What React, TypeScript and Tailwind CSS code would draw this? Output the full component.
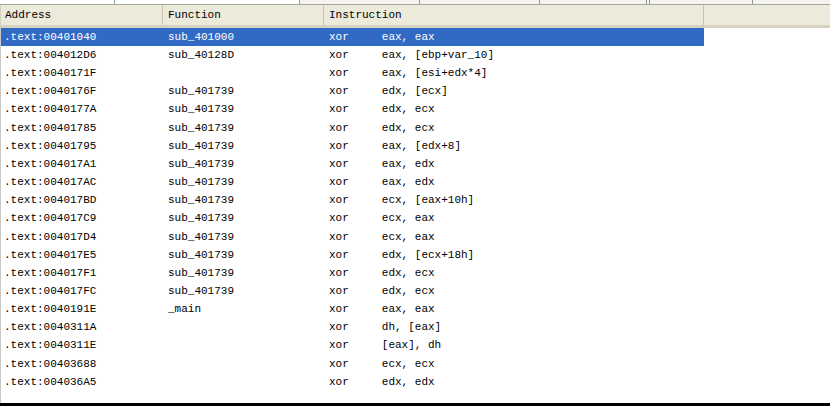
const rows: [string, string, string][] = [
  [".text:00401040", "sub_401000", "xor     eax, eax"],
  [".text:004012D6", "sub_40128D", "xor     eax, [ebp+var_10]"],
  [".text:0040171F", "", "xor     eax, [esi+edx*4]"],
  [".text:0040176F", "sub_401739", "xor     edx, [ecx]"],
  [".text:0040177A", "sub_401739", "xor     edx, ecx"],
  [".text:00401785", "sub_401739", "xor     edx, ecx"],
  [".text:00401795", "sub_401739", "xor     eax, [edx+8]"],
  [".text:004017A1", "sub_401739", "xor     eax, edx"],
  [".text:004017AC", "sub_401739", "xor     eax, edx"],
  [".text:004017BD", "sub_401739", "xor     ecx, [eax+10h]"],
  [".text:004017C9", "sub_401739", "xor     ecx, eax"],
  [".text:004017D4", "sub_401739", "xor     ecx, eax"],
  [".text:004017E5", "sub_401739", "xor     edx, [ecx+18h]"],
  [".text:004017F1", "sub_401739", "xor     edx, ecx"],
  [".text:004017FC", "sub_401739", "xor     edx, ecx"],
  [".text:0040191E", "_main", "xor     eax, eax"],
  [".text:0040311A", "", "xor     dh, [eax]"],
  [".text:0040311E", "", "xor     [eax], dh"],
  [".text:00403688", "", "xor     ecx, ecx"],
  [".text:004036A5", "", "xor     edx, edx"],
];

export default function App() {
  return (
    <div className="w-[830px] h-[406px] flex flex-col bg-white overflow-hidden font-['Liberation_Mono',monospace] text-[11px] text-black">
      {/* tab strip remnant */}
      <div className="h-[5px] flex bg-[#f4f3ee] border-b border-[#a5a69e]">
        <div className="w-[115px] bg-white border-r border-[#919b9c]" />
        <div className="w-[185px] bg-white border-r border-[#919b9c]" />
        <div className="w-[120px] border-r border-[#919b9c]" />
        <div className="w-[120px] border-r border-[#919b9c]" />
        <div className="w-[107px] border-r border-[#919b9c]" />
        <div className="w-[3px] border-r border-[#919b9c]" />
        <div className="w-[103px] border-r border-[#919b9c]" />
        <div className="flex-1" />
      </div>

      {/* header */}
      <div className="h-[23px] flex bg-[#ebeadb] border-b-[3px] border-[#d6d2c2] border-l border-l-[#d0d0bf]">
        <div className="w-[162px] pl-[4px] flex items-center border-r border-[#c7c5b2]">Address</div>
        <div className="w-[161px] pl-[5px] flex items-center border-r border-[#c7c5b2]">Function</div>
        <div className="w-[380px] pl-[5px] flex items-center border-r border-[#c7c5b2]">Instruction</div>
        <div className="flex-1" />
      </div>

      {/* rows */}
      <div className="flex-1 flex flex-col border-l border-[#c8c8c8]">
        {rows.map(([addr, func, ins], i) => (
          <div key={addr} className="h-[18.16px] flex shrink-0">
            <div
              className={`w-[703px] flex items-center whitespace-pre ${
                i === 0 ? "bg-[#316ac5] text-white" : ""
              }`}
            >
              <div className="w-[162px] pl-[3px]">{addr}</div>
              <div className="w-[161px] pl-[5px]">{func}</div>
              <div className="flex-1 pl-[5px]">{ins}</div>
            </div>
          </div>
        ))}
      </div>

      <div className="h-[3px] bg-black" />
    </div>
  );
}
